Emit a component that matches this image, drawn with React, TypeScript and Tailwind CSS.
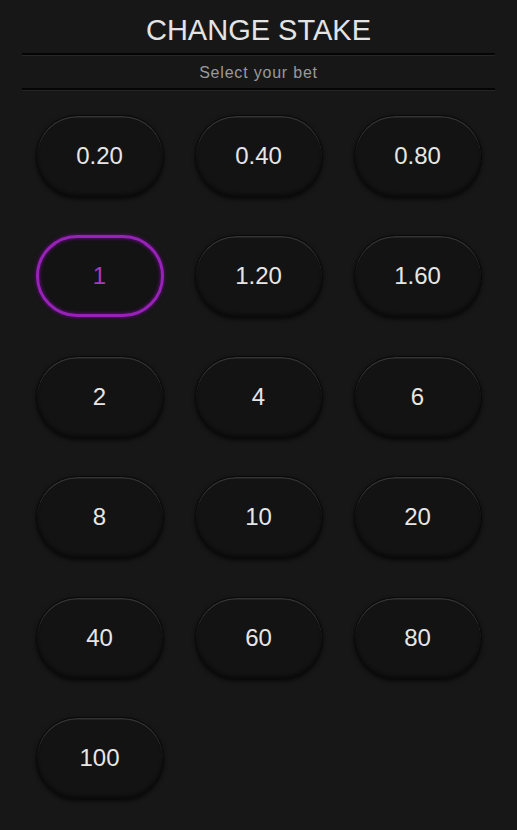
import { useState } from "react";

const STAKES = ["0.20", "0.40", "0.80", "1", "1.20", "1.60", "2", "4", "6", "8", "10", "20", "40", "60", "80", "100"];

// Single stake pill
function StakeButton({
  label,
  selected,
  onSelect,
}: {
  label: string;
  selected: boolean;
  onSelect: (v: string) => void;
}) {
  return (
    <button
      type="button"
      onClick={() => onSelect(label)}
      className={`h-[82px] w-[128px] rounded-full bg-[#131313] text-[24px] leading-none ${
        selected
          ? "border-[3px] border-[#9622b6] text-[#a33bc4] shadow-[0_0_3px_1px_#4f0c63,inset_0_0_3px_1px_#560d6c]"
          : "border border-[#0a0a0a] text-[#e6e6e6] shadow-[inset_0_1.5px_0_#333333,inset_0_-2px_3px_#0c0c0c,0_2px_4px_rgba(0,0,0,0.7)]"
      }`}
    >
      {label}
    </button>
  );
}

export default function App() {
  const [stake, setStake] = useState("1");

  return (
    <div className="min-h-screen bg-[#171717] font-['Liberation_Sans',Arial,sans-serif]">
      {/* Header */}
      <h1 className="pt-[12px] text-center text-[29px] leading-[36px] text-[#e4e4e4]">CHANGE STAKE</h1>

      <div className="mx-[22px] mt-[5px]">
        <div className="h-[2px] bg-[#050505]" />
        <div className="h-px bg-[#262626]" />
        <p className="pt-[10px] pb-[8px] text-center text-[16px] leading-[14px] tracking-[0.8px] text-[#9a9a9a]">
          Select your bet
        </p>
        <div className="h-[2px] bg-[#050505]" />
        <div className="h-px bg-[#262626]" />
      </div>

      {/* Stakes grid */}
      <div className="mx-auto mt-[24px] grid w-[446px] grid-cols-3 gap-x-[31px] gap-y-[38.4px] pb-6">
        {STAKES.map((s) => (
          <StakeButton key={s} label={s} selected={stake === s} onSelect={setStake} />
        ))}
      </div>
    </div>
  );
}
